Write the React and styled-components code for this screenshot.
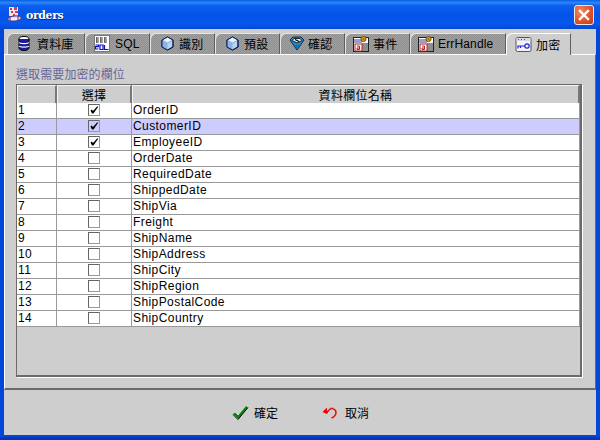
import styled, { createGlobalStyle } from "styled-components"

const fields = [
  "OrderID", "CustomerID", "EmployeeID", "OrderDate", "RequiredDate", "ShippedDate", "ShipVia",
  "Freight", "ShipName", "ShipAddress", "ShipCity", "ShipRegion", "ShipPostalCode", "ShipCountry",
]
const checkedRows = [0, 1, 2]
const selectedRow = 1

const Global = createGlobalStyle`
  html, body { margin: 0; padding: 0; background: #0a3fc8; }
  * { box-sizing: border-box; }
  body { font-family: "Liberation Sans", "Noto Sans CJK TC", sans-serif; font-size: 12px; color: #000; }
`

const Window = styled.div`
  width: 600px;
  height: 440px;
  display: flex;
  flex-direction: column;
  overflow: hidden;
  background: #0346dc;
  padding: 0 4px 5px 4px;
  box-shadow: inset 0 -3px 0 #0a35b0;
`

const TitleBar = styled.div`
  height: 29px;
  margin: 0 -4px;
  padding: 0 7px 0 7px;
  display: flex;
  align-items: center;
  gap: 3px;
  flex: none;
  background: linear-gradient(180deg, #0a5ce8 0%, #2b86f6 9%, #0a5ff0 20%, #0453e6 50%, #0558ee 80%, #0448d4 100%);
`

const TitleText = styled.div`
  font-family: "DejaVu Serif", "Liberation Serif", serif;
  font-weight: 700;
  font-size: 11px;
  letter-spacing: -0.4px;
  color: #fff;
  text-shadow: 1px 1px 0 #0a2a80;
  flex: 1;
  margin-top: 1px;
`

const CloseButton = styled.div`
  width: 20px;
  height: 20px;
  margin-right: -1px;
  margin-top: 1px;
  border: 1px solid #f4e8e0;
  border-radius: 3px;
  background: radial-gradient(circle at 30% 30%, #f08a60, #dc5028 60%, #c03a18);
  display: flex;
  align-items: center;
  justify-content: center;
`

const Body = styled.div`
  flex: 1;
  display: flex;
  flex-direction: column;
  background: #cecece;
  min-height: 0;
`

const TabRow = styled.div`
  height: 25px;
  flex: none;
  padding: 4px 0 0 3px;
  display: flex;
  align-items: stretch;
`

const Tab = styled.div`
  width: ${p => p.$w}px;
  height: ${p => (p.$active ? 22 : 21)}px;
  display: flex;
  align-items: center;
  gap: ${p => p.$gap || 5}px;
  padding-left: ${p => p.$pad || 9}px;
  padding-bottom: 1px;
  border-top: 1px solid ${p => (p.$active ? "#fff" : "#e6e6e6")};
  border-left: 1px solid ${p => (p.$active ? "#fff" : "#e6e6e6")};
  border-right: 1px solid #5e5e5e;
  border-top-left-radius: 6px 7px;
  letter-spacing: 0.15px;
  background: ${p => (p.$active ? "#cecece" : "repeating-conic-gradient(#8e8e8e 0 25%, #a2a2a2 0 50%) 0 0 / 2px 2px")};
  position: relative;
  z-index: ${p => (p.$active ? 1 : 0)};
`

const Panel = styled.div`
  height: 336px;
  flex: none;
  border-top: 1px solid #fff;
  border-left: 1px solid #fff;
  border-right: 1px solid #6a6a6a;
  border-bottom: 2px solid #6a6a6a;
  padding: 12px 13px 11px 11px;
  display: flex;
  flex-direction: column;
`

const Hint = styled.div`
  height: 17px;
  line-height: 16px;
  color: #66669a;
  letter-spacing: 0.1px;
  flex: none;
`

const TableFrame = styled.div`
  flex: 1;
  border-top: 1px solid #6a6a6a;
  border-left: 1px solid #6a6a6a;
  border-right: 2px solid #6a6a6a;
  border-bottom: 2px solid #6a6a6a;
  box-shadow: 1px 1px 0 #fff;
`

const Row = styled.div`
  display: grid;
  grid-template-columns: 40px 75px 1fr;
  height: 16px;
  background: ${p => (p.$selected ? "#ccccff" : "#fff")};
  border-bottom: 1px solid #999;
`

const HeaderRow = styled.div`
  display: grid;
  grid-template-columns: 40px 75px 1fr;
  height: 18px;
  border-bottom: 1px solid #8a8a8a;
`

const HeaderCell = styled.div`
  background: #cecece;
  border-top: 1px solid #f4f4f4;
  border-left: 1px solid #f4f4f4;
  border-right: 2px solid #777;
  display: flex;
  align-items: center;
  justify-content: center;
  letter-spacing: 0.3px;
`

const Cell = styled.div`
  border-right: 1px solid #999;
  padding-left: 1px;
  line-height: 14px;
  letter-spacing: 0.42px;
  white-space: nowrap;
  overflow: hidden;
`

const CheckCell = styled.div`
  border-right: 1px solid #999;
  padding-bottom: 1px;
  display: flex;
  align-items: flex-start;
  justify-content: center;
  padding-top: 1px;
`

const CheckBox = styled.div`
  width: 12px;
  height: 12px;
  background: ${p => (p.$selected ? "#ccccff" : "#fff")};
  border-top: 1px solid #666;
  border-left: 1px solid #666;
  border-right: 1px solid #999;
  border-bottom: 1px solid #999;
  display: flex;
  align-items: center;
  justify-content: center;
`

const Footer = styled.div`
  flex: 1;
  display: flex;
  align-items: center;
  padding: 0 0 0 228px;
`

const FooterButton = styled.div`
  display: flex;
  align-items: center;
  gap: ${p => p.$gap}px;
  width: ${p => p.$w}px;
  font-size: 12px;
`

const DbIcon = () => (
  <svg width="12" height="15" viewBox="0 0 12 15">
    <ellipse cx="6" cy="3" rx="5" ry="2.500" fill="#fff" stroke="#000" />
    <path d="M1 3v9c0 1.400 2.200 2.500 5 2.500s5-1.100 5-2.500V3" fill="#1c1c9c" stroke="#000" />
    <path d="M1 6.500c1 1.400 9 1.400 10 0M1 10c1 1.400 9 1.400 10 0" fill="none" stroke="#fff" strokeWidth="1.200" />
  </svg>
)

const SqlIcon = () => (
  <svg width="16" height="17" viewBox="0 0 16 17">
    <rect x="0.500" y="0.500" width="15" height="16" fill="#fff" stroke="#777" />
    <path d="M2 3h12M2 5h12M2 7h12" stroke="#555" strokeDasharray="1 1" />
    <path d="M3 2v6M7 2v6M11 2v6" stroke="#222" />
    <path d="M1.500 10h3v1.600h-3v2.400h3M6 10h3v4.500H6zM10.500 10v4.500h4" fill="none" stroke="#1010c0" strokeWidth="1.200" />
  </svg>
)

const CubeIcon = () => (
  <svg width="13" height="15" viewBox="0 0 13 15">
    <path d="M6.500 1L12 4v7l-5.500 3L1 11V4z" fill="#b8d4f4" stroke="#10204c" />
    <path d="M6.500 1L12 4 6.500 7 1 4z" fill="#e8f2fc" stroke="#5070a0" strokeWidth="0.500" />
    <path d="M6.500 7v7L1 11V4z" fill="#8cb4e8" />
    <path d="M6.500 1L12 4v7l-5.500 3L1 11V4z" fill="none" stroke="#10204c" />
  </svg>
)

const FunnelIcon = () => (
  <svg width="16" height="15" viewBox="0 0 16 15">
    <path d="M1 4L4 1h8l3 3-7 10z" fill="#1c8cd0" stroke="#0c2c50" />
    <path d="M3 4.500L5 2.500h6l2 2L8 7z" fill="#e4e4e4" stroke="#222" />
    <path d="M6 3.500l4 2" stroke="#000" strokeWidth="1.200" />
    <path d="M6 9l2 4 2-4z" fill="#0870c8" />
  </svg>
)

const FormIcon = () => (
  <svg width="16" height="16" viewBox="0 0 16 16">
    <rect x="0.500" y="1.500" width="15" height="14" fill="#fff" stroke="#222" />
    <rect x="9" y="7" width="6" height="8" fill="#8e8e8e" />
    <path d="M1 4h9M1 6h8" stroke="#3a3a8c" />
    <rect x="2" y="8" width="7" height="7" fill="#fff" stroke="#b02020" />
    <path d="M4 10h2.500v3.500H4V12h2.500" fill="none" stroke="#b02020" />
    <circle cx="10.500" cy="3" r="2.600" fill="#d89818" stroke="#805010" />
    <circle cx="10.500" cy="3" r="0.800" fill="#208020" />
  </svg>
)

const KeyIcon = () => (
  <svg width="17" height="15" viewBox="0 0 17 15">
    <rect x="1" y="0.500" width="15" height="14" rx="1.500" fill="#f4f4f8" stroke="#555" />
    <rect x="1.500" y="1" width="14" height="3" fill="#d8d8e0" />
    <path d="M3 2.500h1M6 2.500h1M9 2.500h1" stroke="#555" />
    <circle cx="12" cy="9" r="2.200" fill="none" stroke="#2020d8" strokeWidth="1.200" />
    <path d="M10 9H3v2.500M5.500 9v2" fill="none" stroke="#2020d8" strokeWidth="1.200" />
  </svg>
)

const AppIcon = () => (
  <svg width="16" height="17" viewBox="0 0 16 17">
    <rect x="2" y="1" width="9" height="9" fill="#f4e4e8" />
    <path d="M3 2h2v2H3zM7 1h3v3H7zM4 5h2v2H4zM8 5h3v2H8zM6 8h2v2H6z" fill="#d83850" />
    <path d="M1 12c2-2 10-3 13-1v2c-2 2-10 3-13 1z" fill="#e8d8f0" stroke="#503880" />
    <path d="M3 10v4M11 9v5" stroke="#503880" />
    <path d="M4 13h6" stroke="#fff" />
  </svg>
)

const CloseIcon = () => (
  <svg width="12" height="12" viewBox="0 0 12 12">
    <path d="M2 2l8 8M10 2l-8 8" stroke="#fff" strokeWidth="2.400" strokeLinecap="square" />
  </svg>
)

const TickMark = () => (
  <svg width="10" height="10" viewBox="0 0 10 10">
    <path d="M1.500 5.500L2.800 4.500 4 6 8.500 1 9 2 4.500 8.500H3z" fill="#000" />
  </svg>
)

const OkIcon = () => (
  <svg width="17" height="15" viewBox="0 0 17 15">
    <path d="M0.500 9L3 7l3 3 8-9.500L16.500 2 6.500 14.500z" fill="#108010" stroke="#fff" strokeWidth="0.600" />
    <path d="M1 9.500l5 5 10-12" fill="none" stroke="#000" />
  </svg>
)

const UndoIcon = () => (
  <svg width="15" height="13" viewBox="0 0 15 13">
    <path d="M0.500 6L5 1.500V4l1 2.500L5 8z" fill="#f00000" />
    <path d="M3 6.500c1 0 3-0.500 4.500-3 2-2 6.500-0.500 6.500 3 0 2.500-2 4.500-4.500 5.500" fill="none" stroke="#f00000" strokeWidth="1.400" />
    <path d="M7 2.500c2-1.500 5-1 6.500 1" fill="none" stroke="#c09090" strokeWidth="0.800" />
  </svg>
)

const tabs = [
  { label: "資料庫", w: 78, icon: <DbIcon />, pad: 10, gap: 7 },
  { label: "SQL", w: 65, icon: <SqlIcon />, pad: 8, gap: 5 },
  { label: "識別", w: 65, icon: <CubeIcon />, pad: 10, gap: 5 },
  { label: "預設", w: 65, icon: <CubeIcon />, pad: 10, gap: 5 },
  { label: "確認", w: 65, icon: <FunnelIcon />, pad: 8, gap: 3 },
  { label: "事件", w: 65, icon: <FormIcon />, pad: 7, gap: 4 },
  { label: "ErrHandle", w: 96, icon: <FormIcon />, pad: 7, gap: 4 },
  { label: "加密", w: 65, icon: <KeyIcon />, pad: 8, gap: 4, active: true },
]

function App() {
  return (
    <Window>
      <Global />
      <TitleBar>
        <AppIcon />
        <TitleText>orders</TitleText>
        <CloseButton><CloseIcon /></CloseButton>
      </TitleBar>
      <Body>
        <TabRow>
          {tabs.map(t => (
            <Tab key={t.label} $w={t.w} $pad={t.pad} $gap={t.gap} $active={t.active}>
              {t.icon}
              {t.label}
            </Tab>
          ))}
        </TabRow>
        <Panel>
          <Hint>選取需要加密的欄位</Hint>
          <TableFrame>
            <HeaderRow>
              <HeaderCell />
              <HeaderCell>選擇</HeaderCell>
              <HeaderCell>資料欄位名稱</HeaderCell>
            </HeaderRow>
            {fields.map((name, i) => (
              <Row key={name} $selected={i === selectedRow}>
                <Cell>{i + 1}</Cell>
                <CheckCell>
                  <CheckBox $selected={i === selectedRow}>
                    {checkedRows.includes(i) && <TickMark />}
                  </CheckBox>
                </CheckCell>
                <Cell>{name}</Cell>
              </Row>
            ))}
          </TableFrame>
        </Panel>
        <Footer>
          <FooterButton $gap={5} $w={90}><OkIcon />確定</FooterButton>
          <FooterButton $gap={8} $w={60}><UndoIcon />取消</FooterButton>
        </Footer>
      </Body>
    </Window>
  )
}

export default App
